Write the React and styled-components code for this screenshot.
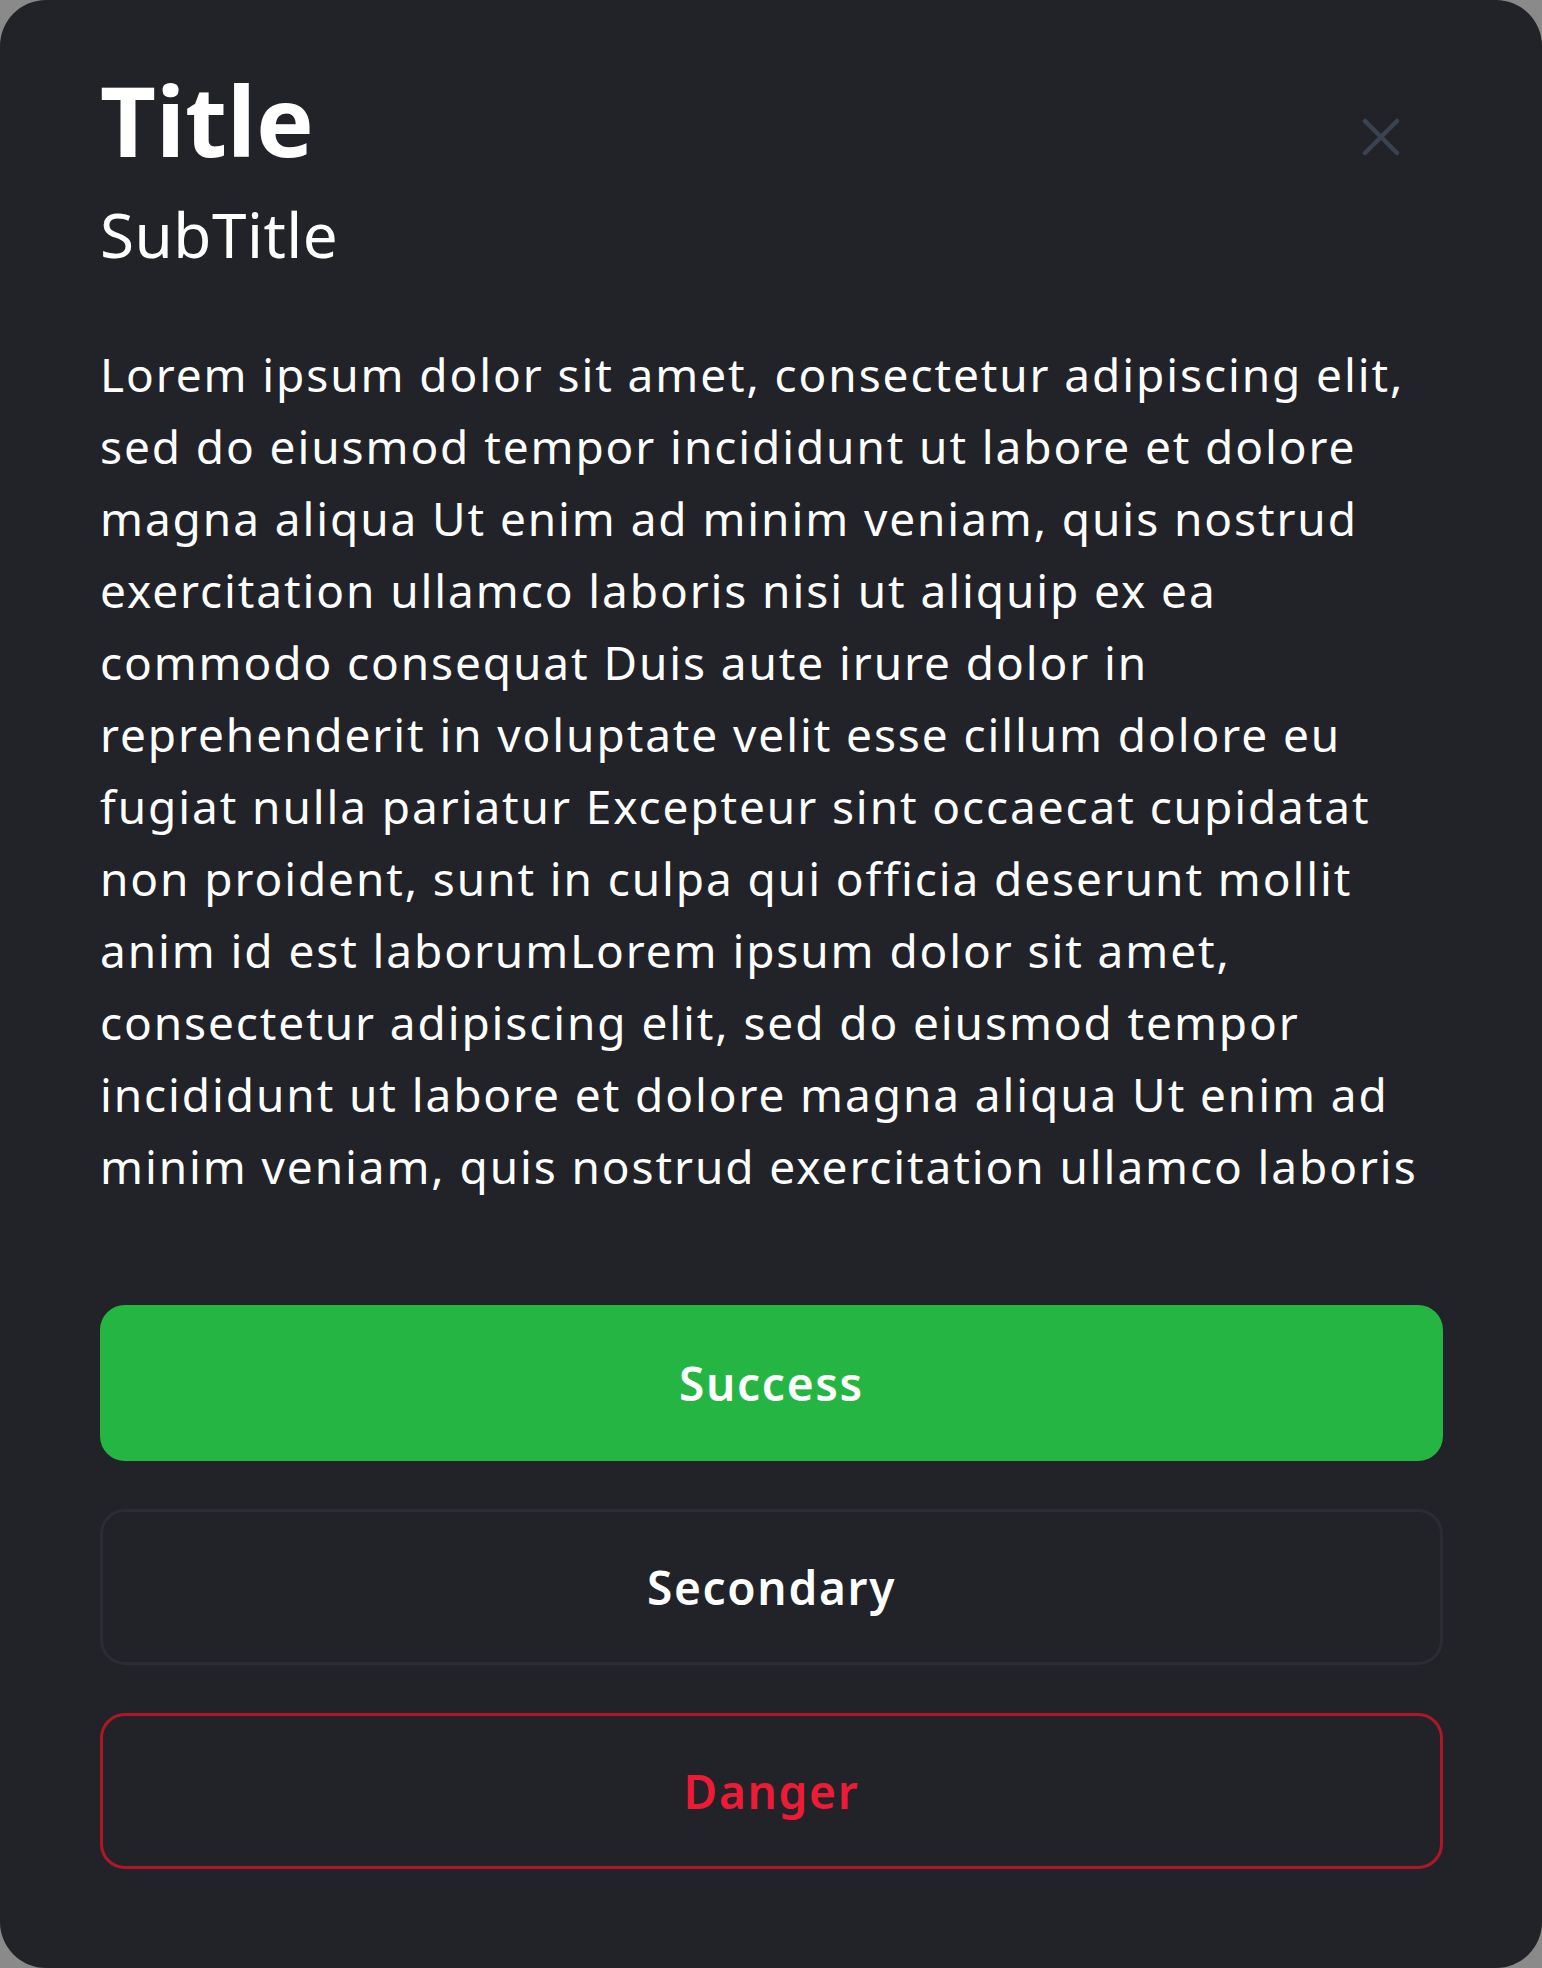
import React from "react";
import styled, { createGlobalStyle } from "styled-components";

const Global = createGlobalStyle`
  html, body { margin: 0; padding: 0; background: #8a8a8a; }
  body { font-family: "Noto Sans", "Open Sans", sans-serif; }
  * { box-sizing: border-box; }
`;

const Card = styled.div`
  width: 1542px;
  min-height: 1968px;
  background: #212328;
  border-radius: 46px;
  padding: 60px 99px 99px 100px;
  display: flex;
  flex-direction: column;
  color: #ffffff;
`;

const Header = styled.header`
  display: flex;
  justify-content: space-between;
  align-items: flex-start;
`;

const Titles = styled.div`
  display: flex;
  flex-direction: column;
`;

const Title = styled.h1`
  margin: 0;
  font-size: 97px;
  font-weight: 700;
  line-height: 118px;
`;

const SubTitle = styled.h2`
  margin: 15px 0 0;
  font-size: 62px;
  font-weight: 400;
  line-height: 82px;
  letter-spacing: 0.5px;
`;

const CloseButton = styled.button`
  background: none;
  border: 0;
  padding: 0;
  margin-top: 55px;
  margin-right: 40px;
  width: 44px;
  height: 44px;
  display: flex;
  align-items: center;
  justify-content: center;
  cursor: pointer;
`;

const Body = styled.p`
  margin: 63px 0 0;
  font-size: 46px;
  line-height: 72px;
  font-weight: 400;
  letter-spacing: 1.9px;
`;

const Actions = styled.div`
  margin-top: 103px;
  display: flex;
  flex-direction: column;
  gap: 48px;
`;

const variants = {
  success: { bg: "#25b542", border: "#25b542", color: "#ffffff" },
  secondary: { bg: "transparent", border: "#2a2d34", color: "#ffffff" },
  danger: { bg: "transparent", border: "#b0162a", color: "#ef1b36" },
};

const ActionButton = styled.button`
  height: 156px;
  width: 100%;
  border-radius: 25px;
  border: 3px solid ${(p) => variants[p.$variant].border};
  background: ${(p) => variants[p.$variant].bg};
  color: ${(p) => variants[p.$variant].color};
  font-family: "Noto Sans", "Open Sans", sans-serif;
  font-size: 46px;
  font-weight: 600;
  letter-spacing: 1.7px;
  cursor: pointer;
`;

const text =
  "Lorem ipsum dolor sit amet, consectetur adipiscing elit, sed do eiusmod tempor incididunt ut labore et dolore magna aliqua Ut enim ad minim veniam, quis nostrud exercitation ullamco laboris nisi ut aliquip ex ea commodo consequat Duis aute irure dolor in reprehenderit in voluptate velit esse cillum dolore eu fugiat nulla pariatur Excepteur sint occaecat cupidatat non proident, sunt in culpa qui officia deserunt mollit anim id est laborumLorem ipsum dolor sit amet, consectetur adipiscing elit, sed do eiusmod tempor incididunt ut labore et dolore magna aliqua Ut enim ad minim veniam, quis nostrud exercitation ullamco laboris";

export default function App() {
  return (
    <>
      <Global />
      <Card>
        <Header>
          <Titles>
            <Title>Title</Title>
            <SubTitle>SubTitle</SubTitle>
          </Titles>
          <CloseButton aria-label="Close">
            <svg width="38" height="38" viewBox="0 0 38 38">
              <path d="M3 3 L35 35 M35 3 L3 35" stroke="#3a434f" strokeWidth="4.5" strokeLinecap="round" />
            </svg>
          </CloseButton>
        </Header>
        <Body>{text}</Body>
        <Actions>
          <ActionButton $variant="success">Success</ActionButton>
          <ActionButton $variant="secondary">Secondary</ActionButton>
          <ActionButton $variant="danger">Danger</ActionButton>
        </Actions>
      </Card>
    </>
  );
}
